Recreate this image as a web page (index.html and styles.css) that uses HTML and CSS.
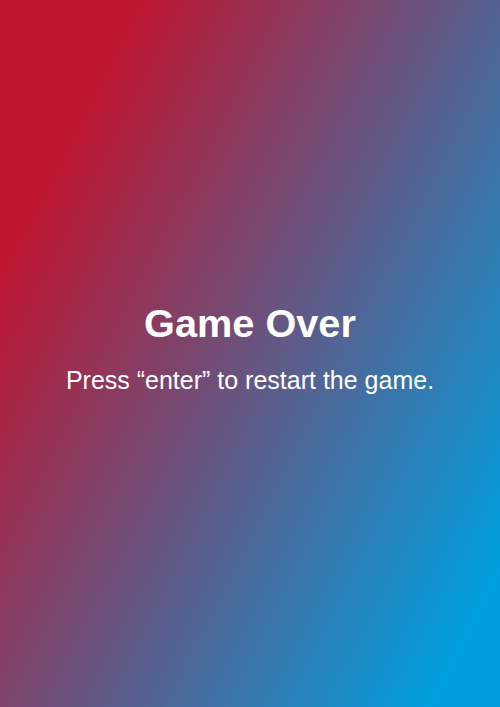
FILE: index.html
```html
<!DOCTYPE html>
<html>
<head>
<meta charset="utf-8">
<link rel="stylesheet" href="styles.css">
</head>
<body>
<main class="screen">
  <h1 class="title">Game Over</h1>
  <p class="hint">Press “enter” to restart the game.</p>
</main>
</body>
</html>
```
FILE: styles.css
```css
html, body {
  margin: 0;
  padding: 0;
  height: 100%;
}
.screen {
  height: 707px;
  box-sizing: border-box;
  padding-bottom: 12px;
  display: flex;
  flex-direction: column;
  align-items: center;
  justify-content: center;
  background: linear-gradient(117deg, #be1530 16%, #00a0e0 92%);
  color: #fff;
  font-family: "Liberation Sans", Arial, sans-serif;
  text-align: center;
}
.title {
  margin: 0;
  font-size: 39.7px;
  font-weight: bold;
  line-height: 1.2;
}
.hint {
  margin: 18px 0 0;
  font-size: 25px;
  line-height: 1.2;
}
```
